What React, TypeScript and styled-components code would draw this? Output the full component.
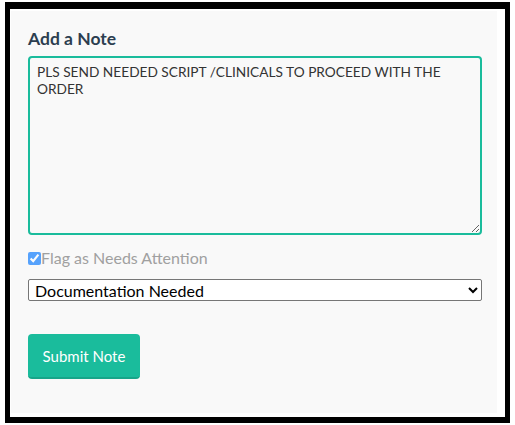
import React from "react";
import styled, { createGlobalStyle } from "styled-components";

const Global = createGlobalStyle`
  html, body { margin: 0; padding: 0; background: #ffffff; }
  body { font-family: Lato, "Open Sans", sans-serif; }
`;

const Frame = styled.div`
  margin: 2px 0 0 5px;
  width: 495px;
  height: 408px;
  border-style: solid;
  border-color: #000;
  border-width: 7px 5px 6px 5px;
  background: #ffffff;
  display: flex;
`;

const Panel = styled.div`
  margin: 2px 8px 4px 1px;
  flex: 1;
  background: #f9f9f9;
  padding: 17px 15px 0 17px;
  display: flex;
  flex-direction: column;
`;

const Title = styled.h3`
  margin: 0;
  font-family: Lato, sans-serif;
  font-weight: 700;
  font-size: 17.5px;
  line-height: 21px;
  color: #2c3e50;
`;

const NoteArea = styled.textarea`
  margin-top: 7px;
  box-sizing: border-box;
  width: 100%;
  height: 179px;
  border: 2px solid #1abc9c;
  border-radius: 4px;
  background: #f9f9f9;
  padding: 5px 7px;
  font-family: Lato, sans-serif;
  font-size: 13.7px;
  line-height: normal;
  color: #333;
  outline: none;
`;

const CheckRow = styled.label`
  margin-top: 14px;
  display: flex;
  align-items: center;
  font-family: Lato, sans-serif;
  font-size: 16px;
  color: #a0a0a0;
  line-height: 18px;
`;

const Check = styled.input`
  margin: 0;
  width: 13px;
  height: 13px;
  opacity: 0.65;
`;

const Select = styled.select`
  margin-top: 12px;
  box-sizing: border-box;
  width: 100%;
  height: 22px;
  border: 1px solid #767676;
  border-radius: 2px;
  background: #fff;
  font-family: Lato, sans-serif;
  font-size: 16px;
  color: #000;
  padding: 0 0 0 2px;
`;

const SubmitButton = styled.button`
  margin-top: 33px;
  align-self: flex-start;
  box-sizing: border-box;
  width: 112px;
  height: 45px;
  border: none;
  border-bottom: 2px solid #17a589;
  border-radius: 4px;
  background: #1abc9c;
  color: #fff;
  font-family: Lato, sans-serif;
  font-size: 15px;
  font-weight: 400;
  cursor: pointer;
`;

export default function App() {
  return (
    <>
      <Global />
      <Frame>
        <Panel>
          <Title>Add a Note</Title>
          <NoteArea
            defaultValue="PLS SEND NEEDED SCRIPT /CLINICALS TO PROCEED WITH THE ORDER"
          />
          <CheckRow>
            <Check type="checkbox" defaultChecked />
            Flag as Needs Attention
          </CheckRow>
          <Select defaultValue="doc">
            <option value="doc">Documentation Needed</option>
            <option value="other">Other</option>
          </Select>
          <SubmitButton type="button">Submit Note</SubmitButton>
        </Panel>
      </Frame>
    </>
  );
}
